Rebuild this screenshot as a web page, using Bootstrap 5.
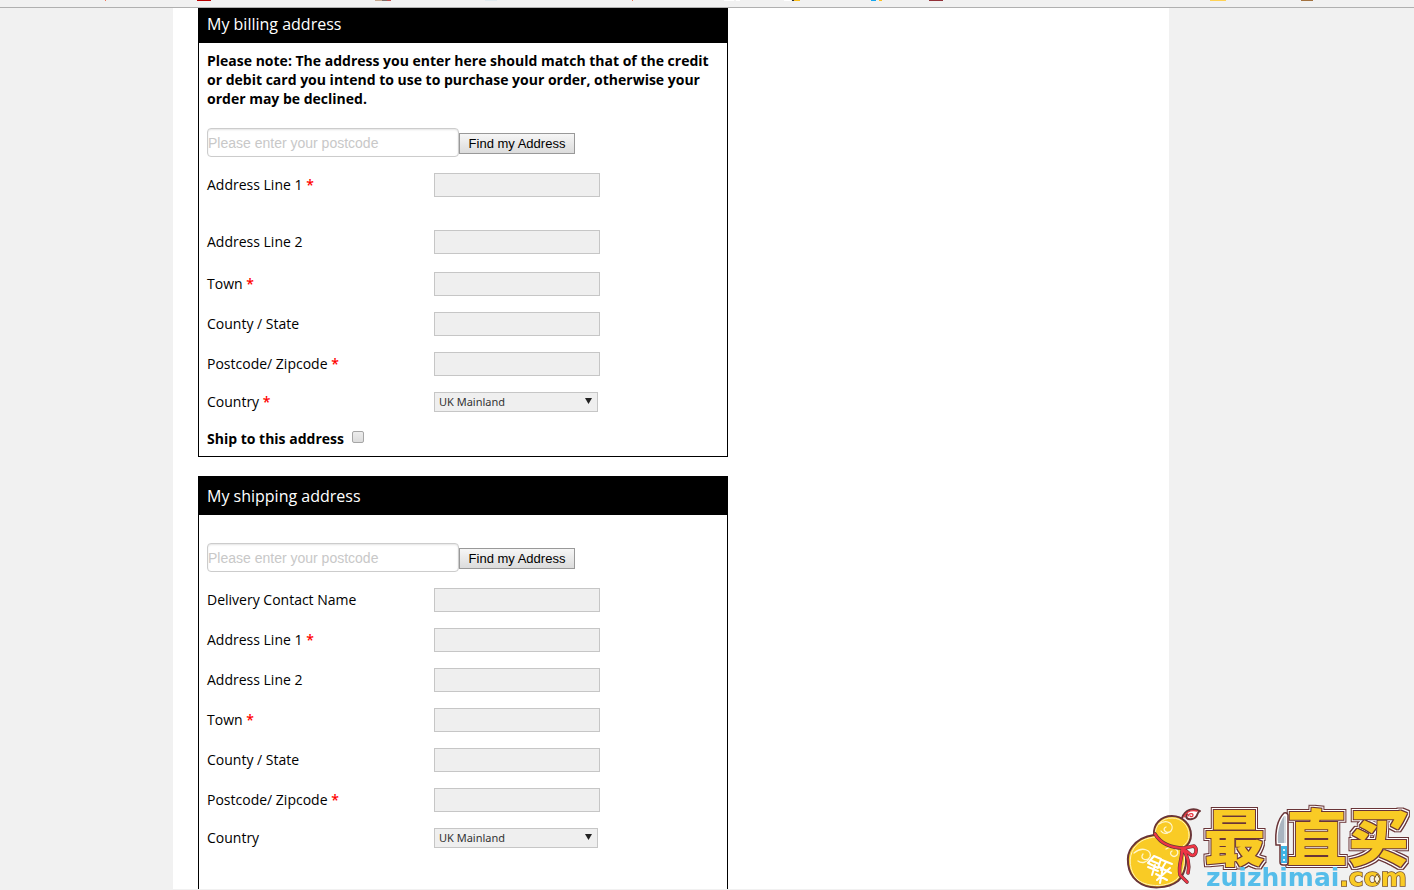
<!DOCTYPE html>
<html lang="en">
<head>
<meta charset="utf-8">
<meta name="viewport" content="width=device-width, initial-scale=1">
<title>My addresses</title>
<link href="https://cdn.jsdelivr.net/npm/bootstrap@5.3.0/dist/css/bootstrap.min.css" rel="stylesheet">
<style>
body { background: #f1f1f1; color: #000; font: 14px/19px "Open Sans", sans-serif; }
.bookmarks { height: 8px; background: #f1f1f1; border-bottom: 1px solid #b0b0b0; }
.page-wrap { padding-right: 72px; margin-top: -4px; margin-bottom: 1px; }
.sheet { width: 100%; max-width: 996px; background: #fff; padding: 0 25px; }
.panel { width: 100%; max-width: 530px; border: 1px solid #000; }
.panel-next { margin-top: 19px; }
.panel-title { background: #000; color: #fff; font-size: 16px; line-height: 22px; padding: 8px; font-weight: 400; margin: 0; }
.panel-body { padding: 8px; }
.strong-text { font-weight: 700; }
.field { min-height: 24px; margin-bottom: 16px; }
.field label { width: 227px; padding-bottom: 1px; }
.field-error { margin-bottom: 33px; }
.field-wide { margin-bottom: 18px; }
.field-select { min-height: 20px; }
.req { color: #f00; font-weight: 600; }
.box { width: 166px; height: 24px; border: 1px solid #c6c6c6; background: #efefef; padding: 0 4px; }
.pick { width: 164px; height: 20px; border: 1px solid #c6c6c6; background: #efefef; color: #333; font: 11px/18px "Noto Sans", sans-serif; padding: 0 4px; appearance: none; border-radius: 0; }
.pick-wrap svg { right: 6px; top: 6px; pointer-events: none; }
.lookup { margin: 20px 0 16px; }
.postcode { width: 252px; height: 29px; border: 1px solid #ccc; border-radius: 4px; box-shadow: inset 0 1px 2px #e4e4e4; font: 14px "Liberation Sans", sans-serif; padding: 1px 0; }
.postcode::placeholder { color: #c8c8c8; opacity: 1; }
.find { width: 116px; height: 21px; margin-top: 2px; border: 1px solid #999; background: linear-gradient(#f6f6f6, #dcdcdc); color: #000; font: 13px/17px "Liberation Sans", sans-serif; padding: 0; white-space: nowrap; }
.same-row { padding-top: 1px; }
.tick { appearance: none; width: 12px; height: 12px; margin-bottom: 3px; border: 1px solid #a6a6a6; border-radius: 2px; background: linear-gradient(#ededed, #dcdcdc); }
.tick:checked { background: #555; }
.zh { font: 900 61px "Noto Sans CJK SC", sans-serif; }
.latin { font: bold 25px "DejaVu Sans", sans-serif; }
</style>
<script src="https://cdn.jsdelivr.net/npm/bootstrap@5.3.0/dist/js/bootstrap.bundle.min.js"></script>
</head>
<body class="d-flex flex-column min-vh-100">

<div class="bookmarks sticky-top overflow-hidden">
  <!-- lower edges of the bookmark icons -->
  <svg class="d-block" width="1414" height="7" shape-rendering="crispEdges" aria-hidden="true">
    <path fill="#f17458" d="M105 0h1v1h-1zM632 0h1v1h-1z"/>
    <path fill="#b80000" d="M197 0h14v1h-14z"/>
    <path fill="#c9a98d" d="M375 0h7v1h-7z"/><path fill="#7d6e69" d="M382 0h5v1h-5z"/><path fill="#c05050" d="M387 0h4v1h-4z"/>
    <path fill="#e0eaee" d="M485 0h12v1h-12z"/>
    <path fill="#fff" d="M724 0h10v1h-10zM736 0h4v1h-4zM784 0h7v1h-7z"/>
    <path fill="#333" d="M792 0h2v1h-2z"/><path fill="#fcc01e" d="M794 0h6v1h-6zM879 0h3v1h-3z"/>
    <path fill="#13a6f0" d="M871 0h5v1h-5z"/><path fill="#923038" d="M929 0h14v1h-14z"/>
    <path fill="#ffd255" d="M1210 0h16v1h-16z"/><path fill="#a37240" d="M1301 0h12v1h-12z"/>
  </svg>
</div>

<div class="page-wrap flex-fill d-flex justify-content-center">
  <main class="sheet d-flex flex-column">

    <form class="panel">
      <h2 class="panel-title">My billing address</h2>
      <div class="panel-body">
        <p class="strong-text m-0">Please note: The address you enter here should match that of the credit or debit card you intend to use to purchase your order, otherwise your order may be declined.</p>
        <div class="lookup d-flex align-items-center">
          <input class="postcode" type="text" placeholder="Please enter your postcode" aria-label="Billing postcode">
          <button class="find" type="button">Find my Address</button>
        </div>
        <div class="field field-error d-flex align-items-center"><label for="b1">Address Line 1 <span class="req">*</span></label><input class="box" id="b1" type="text"></div>
        <div class="field field-wide d-flex align-items-center"><label for="b2">Address Line 2</label><input class="box" id="b2" type="text"></div>
        <div class="field d-flex align-items-center"><label for="b3">Town <span class="req">*</span></label><input class="box" id="b3" type="text"></div>
        <div class="field d-flex align-items-center"><label for="b4">County / State</label><input class="box" id="b4" type="text"></div>
        <div class="field d-flex align-items-center"><label for="b5">Postcode/ Zipcode <span class="req">*</span></label><input class="box" id="b5" type="text"></div>
        <div class="field field-select d-flex align-items-center"><label for="b6">Country <span class="req">*</span></label>
          <span class="pick-wrap position-relative d-flex"><select class="pick" id="b6"><option>UK Mainland</option></select><svg class="position-absolute" width="7" height="7" aria-hidden="true"><path d="M0 0h7L3.500 6z" fill="#222"/></svg></span></div>
        <div class="same-row d-flex align-items-center gap-2"><label class="strong-text" for="same">Ship to this address</label><input class="tick" id="same" type="checkbox"></div>
      </div>
    </form>

    <form class="panel panel-next flex-fill border-bottom-0">
      <h2 class="panel-title">My shipping address</h2>
      <div class="panel-body">
        <div class="lookup d-flex align-items-center">
          <input class="postcode" type="text" placeholder="Please enter your postcode" aria-label="Shipping postcode">
          <button class="find" type="button">Find my Address</button>
        </div>
        <div class="field d-flex align-items-center"><label for="s0">Delivery Contact Name</label><input class="box" id="s0" type="text"></div>
        <div class="field d-flex align-items-center"><label for="s1">Address Line 1 <span class="req">*</span></label><input class="box" id="s1" type="text"></div>
        <div class="field d-flex align-items-center"><label for="s2">Address Line 2</label><input class="box" id="s2" type="text"></div>
        <div class="field d-flex align-items-center"><label for="s3">Town <span class="req">*</span></label><input class="box" id="s3" type="text"></div>
        <div class="field d-flex align-items-center"><label for="s4">County / State</label><input class="box" id="s4" type="text"></div>
        <div class="field d-flex align-items-center"><label for="s5">Postcode/ Zipcode <span class="req">*</span></label><input class="box" id="s5" type="text"></div>
        <div class="field field-select mb-0 d-flex align-items-center"><label for="s6">Country</label>
          <span class="pick-wrap position-relative d-flex"><select class="pick" id="s6"><option>UK Mainland</option></select><svg class="position-absolute" width="7" height="7" aria-hidden="true"><path d="M0 0h7L3.500 6z" fill="#222"/></svg></span></div>
      </div>
    </form>
  </main>
</div>

<!-- site logo: gourd, name and domain -->
<svg class="position-fixed bottom-0 end-0" width="294" height="120" viewBox="0 -30 294 120" role="img" aria-label="zuizhimai.com">
  <defs>
    <!-- brown, white and brown rims around the yellow name -->
    <filter id="rim" x="-5%" y="-10%" width="110%" height="120%" color-interpolation-filters="sRGB">
      <feMorphology in="SourceAlpha" operator="dilate" radius="3" result="d3"/>
      <feMorphology in="SourceAlpha" operator="dilate" radius="2" result="d2"/>
      <feMorphology in="SourceAlpha" operator="dilate" radius="1" result="d1"/>
      <feFlood flood-color="#693437" result="brown"/>
      <feFlood flood-color="#fff" result="white"/>
      <feComposite in="brown" in2="d3" operator="in" result="outer"/>
      <feComposite in="white" in2="d2" operator="in" result="middle"/>
      <feComposite in="brown" in2="d1" operator="in" result="inner"/>
      <feMerge><feMergeNode in="outer"/><feMergeNode in="middle"/><feMergeNode in="inner"/><feMergeNode in="SourceGraphic"/></feMerge>
    </filter>
  </defs>
  <g stroke-linecap="round" stroke-linejoin="round">
    <path d="M62 18C65 10 73 7 80 11C76 12 79 18 72 19C67 20 65 17 67 14" fill="#fff" stroke="#693437" stroke-width="2"/>
    <path d="M64 17C66 12 71 10 77 11M68 16C69 13 73 13 73 15C73 17 71 17 70 16" fill="none" stroke="#e8323c" stroke-width="1.300"/>
    <path d="M34 35C33 24 41 16 52 16C63 16 71 25 71 35C71 41 68 45 64 48C68 60 66 73 58 81C49 88 29 91 17 81C7 73 5 56 12 47C18 39 26 36 34 35Z" fill="#f9cb25" stroke="#693437" stroke-width="2"/>
    <path d="M35 35C35 25 42 18 52 18C62 18 69 26 69 35C69 40 67 43 63 46C66 59 65 71 57 79C48 87 29 88 18 80C9 72 8 57 14 48C20 40 27 38 35 37Z" fill="none" stroke="#fff4bd" stroke-width="1"/>
    <path d="M39 24C48 18 55 25 51 31C47 35 41 29 46 27M14 53C22 46 32 50 30 57C27 62 19 59 23 54M46 49C53 45 60 50 57 55C53 59 48 53 52 51M41 31C43 34 47 34 49 32M18 61C22 64 27 62 29 59" fill="none" stroke="#fff5cc" stroke-width="1.300"/>
    <path d="M35 34C41 44 51 48 64 48L74 46C78 49 76 57 71 55C67 52 65 49 62 49C68 55 70 65 68 73M62 51C62 60 58 64 60 75L67 82" fill="none" stroke="#693437" stroke-width="3.600"/>
    <path d="M35 34C41 44 51 48 64 48L74 46C78 49 76 57 71 55C67 52 65 49 62 49C68 55 70 65 68 73M62 51C62 60 58 64 60 75L67 82" fill="none" stroke="#ef3545" stroke-width="2.400"/>
    <path d="M34 56L41 59L38 68L28 63ZM32 61L39 64M28 67L38 71M35 65L32 75M42 60L52 64M46 62L41 70M39 67L51 73M50 68L37 80M43 67L40 83M36 74L47 80" fill="none" stroke="#fff" stroke-width="2"/>
  </g>
  <text class="zh" x="84 166 228" y="61" fill="#f9cb25" filter="url(#rim)">最直买</text>
  <path d="M164 13C158 19 155 31 156 45H160V62Q160 65 163 65H166Q168 65 168 62V15Q167 12 164 13Z" fill="#fff" stroke="#693437" stroke-width="1.500"/>
  <path d="M164 16C159 23 157 34 158 43H166V17Z" fill="#a9b4c0"/><path d="M164 16V43H166V17Z" fill="#d5dce2"/>
  <path d="M161 46H167V63H161Z" fill="#3eb4e5"/><path d="M163 49h2v2h-2zM163 54h2v2h-2zM163 59h2v2h-2z" fill="#d9f3ff"/>
  <text class="latin" x="86" y="86" fill="#55bdea">zuizhimai<tspan fill="#f9cb25" stroke="#76502b" stroke-width="1.500" paint-order="stroke">.com</tspan></text>
  <path d="M257 74L260 79L257 84L254 79Z" fill="#fff7d0" stroke="#76502b" stroke-width="1"/>
</svg>
</body>
</html>
